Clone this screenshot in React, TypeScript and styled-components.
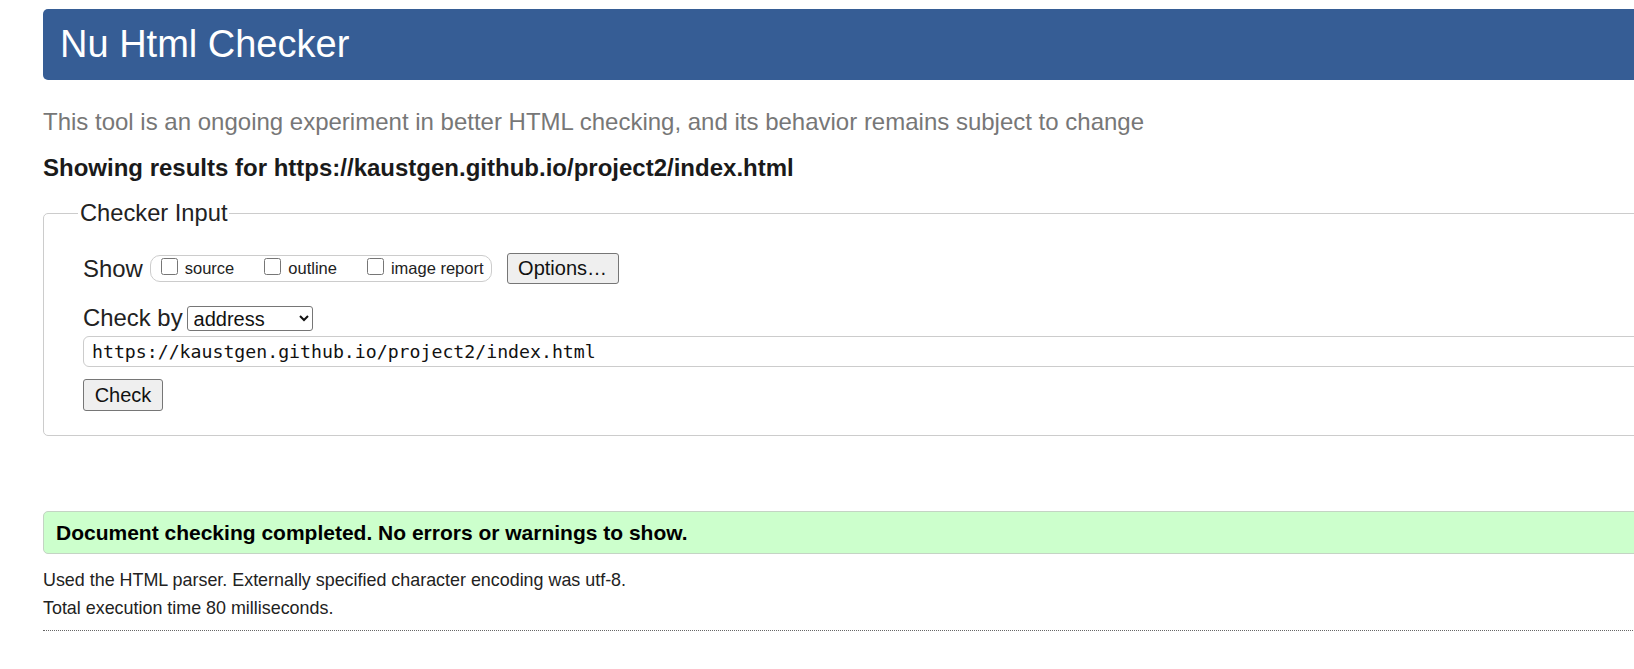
import React from "react";
import styled, { createGlobalStyle } from "styled-components";

const Global = createGlobalStyle`
  html, body { margin: 0; padding: 0; overflow: hidden; background: #fff; }
  body { font-family: "Liberation Sans", Arial, sans-serif; color: #222; }
`;

const Page = styled.div`
  width: 1700px;
  padding: 9px 0 0 43px;
`;

const Header = styled.h1`
  margin: 0;
  height: 71px;
  line-height: 71px;
  padding-left: 17px;
  background: #365d95;
  color: #fff;
  font-size: 38px;
  font-weight: normal;
  border-radius: 5px;
`;

const Intro = styled.p`
  margin: 29px 0 0;
  font-size: 24px;
  line-height: 26px;
  color: #777;
`;

const Results = styled.p`
  margin: 20px 0 0;
  font-size: 24px;
  line-height: 26px;
  font-weight: bold;
  color: #1a1a1a;
`;

const Field = styled.fieldset`
  margin: 19px 0 0;
  padding: 20px 0 24px 39px;
  border: 1px solid #ccc;
  border-radius: 5px;
  display: flex;
  flex-direction: column;
  align-items: flex-start;
`;

const Legend = styled.legend`
  margin-left: -5px;
  padding: 0 2px;
  font-size: 23.7px;
  line-height: 26px;
  color: #222;
`;

const Row = styled.div<{ $top?: number }>`
  display: flex;
  align-items: center;
  margin-top: ${(p) => p.$top ?? 0}px;
`;

const Label = styled.span`
  font-size: 23.9px;
  line-height: 26px;
  color: #222;
`;

const Pill = styled.span`
  display: inline-flex;
  align-items: center;
  height: 25px;
  margin-left: 7px;
  padding: 0 7px 0 10px;
  border: 1px solid #ccc;
  border-radius: 10px;
`;

const Choice = styled.label<{ $gap: number }>`
  display: inline-flex;
  align-items: center;
  margin-right: ${(p) => p.$gap}px;
  font-size: 16.5px;
  color: #222;
  input {
    margin: 0 7px 5px 0;
    width: 17px;
    height: 17px;
  }
`;

const Button = styled.button<{ $h: number; $w: number }>`
  font-family: "Liberation Sans", Arial, sans-serif;
  font-size: 20px;
  color: #111;
  background: #efefef;
  border: 1px solid #767676;
  border-radius: 3px;
  height: ${(p) => p.$h}px;
  width: ${(p) => p.$w}px;
  padding: 0;
`;

const Select = styled.select`
  margin-left: 4px;
  width: 126px;
  height: 25px;
  font-family: "Liberation Sans", Arial, sans-serif;
  font-size: 20px;
  color: #111;
  border: 1px solid #767676;
  border-radius: 3px;
  background: #fff;
  padding: 0 2px;
`;

const UrlInput = styled.input`
  margin-top: 5px;
  width: 1600px;
  height: 31px;
  box-sizing: border-box;
  padding: 0 8px;
  border: 1px solid #ccc;
  border-radius: 6px;
  font-family: "DejaVu Sans Mono", "Liberation Mono", monospace;
  font-size: 18.2px;
  color: #111;
`;

const Success = styled.div`
  margin-top: 75px;
  height: 41px;
  line-height: 41px;
  padding-left: 12px;
  background: #ccffcc;
  border: 1px solid #c4d4c4;
  border-radius: 5px;
  font-size: 21px;
  font-weight: bold;
  color: #000;
`;

const Note = styled.p<{ $top: number }>`
  margin: ${(p) => p.$top}px 0 0;
  font-size: 17.9px;
  line-height: 20px;
  color: #222;
`;

const Rule = styled.hr`
  margin: 12px 0 0;
  border: 0;
  border-top: 1px dotted #666;
`;

export default function App() {
  return (
    <Page>
      <Global />
      <Header>Nu Html Checker</Header>
      <Intro>
        This tool is an ongoing experiment in better HTML checking, and its behavior remains subject to change
      </Intro>
      <Results>Showing results for https://kaustgen.github.io/project2/index.html</Results>
      <Field>
        <Legend>Checker Input</Legend>
        <Row $top={7}>
          <Label>Show</Label>
          <Pill>
            <Choice $gap={30}>
              <input type="checkbox" />
              source
            </Choice>
            <Choice $gap={30}>
              <input type="checkbox" />
              outline
            </Choice>
            <Choice $gap={0}>
              <input type="checkbox" />
              image report
            </Choice>
          </Pill>
          <Button $w={112} $h={31} style={{ marginLeft: 15 }}>
            Options…
          </Button>
        </Row>
        <Row $top={21}>
          <Label>Check by</Label>
          <Select defaultValue="address">
            <option value="address">address</option>
            <option value="file">file upload</option>
            <option value="text">text input</option>
          </Select>
        </Row>
        <UrlInput defaultValue="https://kaustgen.github.io/project2/index.html" />
        <Button $w={80} $h={32} style={{ marginTop: 12 }}>
          Check
        </Button>
      </Field>
      <Success>Document checking completed. No errors or warnings to show.</Success>
      <Note $top={16}>Used the HTML parser. Externally specified character encoding was utf-8.</Note>
      <Note $top={8}>Total execution time 80 milliseconds.</Note>
      <Rule />
    </Page>
  );
}
